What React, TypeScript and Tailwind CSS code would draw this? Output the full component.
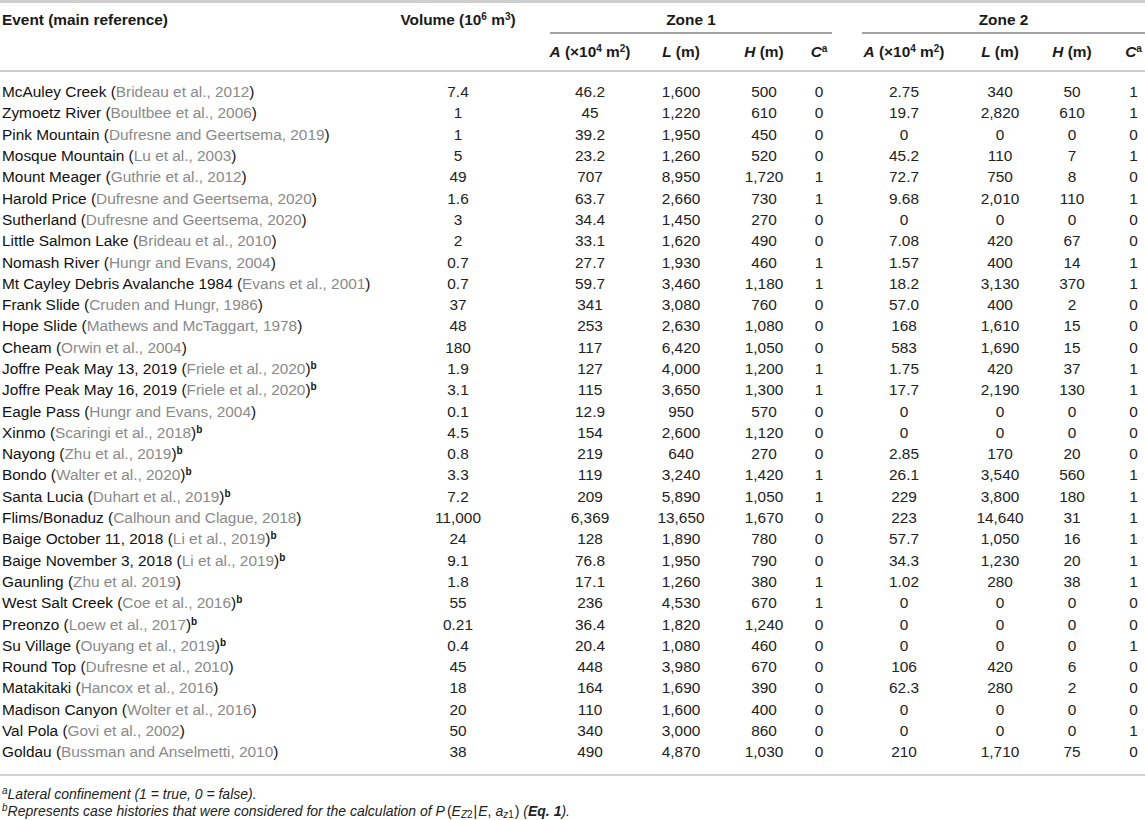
import React from 'react';

type Row = {
  name: string;
  cite: string;
  b?: boolean;
  v: string[];
};

const rows: Row[] = [
  { name: 'McAuley Creek', cite: 'Brideau et al., 2012', v: ['7.4', '46.2', '1,600', '500', '0', '2.75', '340', '50', '1'] },
  { name: 'Zymoetz River', cite: 'Boultbee et al., 2006', v: ['1', '45', '1,220', '610', '0', '19.7', '2,820', '610', '1'] },
  { name: 'Pink Mountain', cite: 'Dufresne and Geertsema, 2019', v: ['1', '39.2', '1,950', '450', '0', '0', '0', '0', '0'] },
  { name: 'Mosque Mountain', cite: 'Lu et al., 2003', v: ['5', '23.2', '1,260', '520', '0', '45.2', '110', '7', '1'] },
  { name: 'Mount Meager', cite: 'Guthrie et al., 2012', v: ['49', '707', '8,950', '1,720', '1', '72.7', '750', '8', '0'] },
  { name: 'Harold Price', cite: 'Dufresne and Geertsema, 2020', v: ['1.6', '63.7', '2,660', '730', '1', '9.68', '2,010', '110', '1'] },
  { name: 'Sutherland', cite: 'Dufresne and Geertsema, 2020', v: ['3', '34.4', '1,450', '270', '0', '0', '0', '0', '0'] },
  { name: 'Little Salmon Lake', cite: 'Brideau et al., 2010', v: ['2', '33.1', '1,620', '490', '0', '7.08', '420', '67', '0'] },
  { name: 'Nomash River', cite: 'Hungr and Evans, 2004', v: ['0.7', '27.7', '1,930', '460', '1', '1.57', '400', '14', '1'] },
  { name: 'Mt Cayley Debris Avalanche 1984', cite: 'Evans et al., 2001', v: ['0.7', '59.7', '3,460', '1,180', '1', '18.2', '3,130', '370', '1'] },
  { name: 'Frank Slide', cite: 'Cruden and Hungr, 1986', v: ['37', '341', '3,080', '760', '0', '57.0', '400', '2', '0'] },
  { name: 'Hope Slide', cite: 'Mathews and McTaggart, 1978', v: ['48', '253', '2,630', '1,080', '0', '168', '1,610', '15', '0'] },
  { name: 'Cheam', cite: 'Orwin et al., 2004', v: ['180', '117', '6,420', '1,050', '0', '583', '1,690', '15', '0'] },
  { name: 'Joffre Peak May 13, 2019', cite: 'Friele et al., 2020', b: true, v: ['1.9', '127', '4,000', '1,200', '1', '1.75', '420', '37', '1'] },
  { name: 'Joffre Peak May 16, 2019', cite: 'Friele et al., 2020', b: true, v: ['3.1', '115', '3,650', '1,300', '1', '17.7', '2,190', '130', '1'] },
  { name: 'Eagle Pass', cite: 'Hungr and Evans, 2004', v: ['0.1', '12.9', '950', '570', '0', '0', '0', '0', '0'] },
  { name: 'Xinmo', cite: 'Scaringi et al., 2018', b: true, v: ['4.5', '154', '2,600', '1,120', '0', '0', '0', '0', '0'] },
  { name: 'Nayong', cite: 'Zhu et al., 2019', b: true, v: ['0.8', '219', '640', '270', '0', '2.85', '170', '20', '0'] },
  { name: 'Bondo', cite: 'Walter et al., 2020', b: true, v: ['3.3', '119', '3,240', '1,420', '1', '26.1', '3,540', '560', '1'] },
  { name: 'Santa Lucia', cite: 'Duhart et al., 2019', b: true, v: ['7.2', '209', '5,890', '1,050', '1', '229', '3,800', '180', '1'] },
  { name: 'Flims/Bonaduz', cite: 'Calhoun and Clague, 2018', v: ['11,000', '6,369', '13,650', '1,670', '0', '223', '14,640', '31', '1'] },
  { name: 'Baige October 11, 2018', cite: 'Li et al., 2019', b: true, v: ['24', '128', '1,890', '780', '0', '57.7', '1,050', '16', '1'] },
  { name: 'Baige November 3, 2018', cite: 'Li et al., 2019', b: true, v: ['9.1', '76.8', '1,950', '790', '0', '34.3', '1,230', '20', '1'] },
  { name: 'Gaunling', cite: 'Zhu et al. 2019', v: ['1.8', '17.1', '1,260', '380', '1', '1.02', '280', '38', '1'] },
  { name: 'West Salt Creek', cite: 'Coe et al., 2016', b: true, v: ['55', '236', '4,530', '670', '1', '0', '0', '0', '0'] },
  { name: 'Preonzo', cite: 'Loew et al., 2017', b: true, v: ['0.21', '36.4', '1,820', '1,240', '0', '0', '0', '0', '0'] },
  { name: 'Su Village', cite: 'Ouyang et al., 2019', b: true, v: ['0.4', '20.4', '1,080', '460', '0', '0', '0', '0', '1'] },
  { name: 'Round Top', cite: 'Dufresne et al., 2010', v: ['45', '448', '3,980', '670', '0', '106', '420', '6', '0'] },
  { name: 'Matakitaki', cite: 'Hancox et al., 2016', v: ['18', '164', '1,690', '390', '0', '62.3', '280', '2', '0'] },
  { name: 'Madison Canyon', cite: 'Wolter et al., 2016', v: ['20', '110', '1,600', '400', '0', '0', '0', '0', '0'] },
  { name: 'Val Pola', cite: 'Govi et al., 2002', v: ['50', '340', '3,000', '860', '0', '0', '0', '0', '1'] },
  { name: 'Goldau', cite: 'Bussman and Anselmetti, 2010', v: ['38', '490', '4,870', '1,030', '0', '210', '1,710', '75', '0'] },
];

// volume, then A/L/H/C for zone 1 and zone 2
const cols = [
  'w-[124px]',
  'ml-[25px] w-[90px]',
  'ml-[20px] w-[52px]',
  'ml-[30px] w-[54px]',
  'ml-[12px] w-[32px]',
  'ml-[25px] w-[88px]',
  'ml-[24px] w-[56px]',
  'ml-[16px] w-[56px]',
  'ml-[22px] w-[23px]',
];

const Cell: React.FC<{ i: number; children: React.ReactNode }> = ({ i, children }) => (
  <div className={`${cols[i]} flex shrink-0 justify-center whitespace-nowrap`}>{children}</div>
);

const App: React.FC = () => {
  const heads = [
    <span key="a">
      <i>A</i> (×10<sup className="text-[10px]">4</sup> m<sup className="text-[10px]">2</sup>)
    </span>,
    <span key="l">
      <i>L</i> (m)
    </span>,
    <span key="h">
      <i>H</i> (m)
    </span>,
    <span key="c">
      <i>C</i>
      <sup className="text-[10px]">a</sup>
    </span>,
  ];

  return (
    <div className="h-[820px] w-[1145px] overflow-hidden bg-white text-[15.4px] text-[#1a1a1a] font-['Liberation_Sans',Arial,sans-serif]">
      <div className="h-[3px] bg-[#cfcfcf]" />

      {/* header row 1 */}
      <div className="flex font-bold leading-[22px]">
        <div className="w-[396px] shrink-0 pl-[2px] pt-[6px]">Event (main reference)</div>
        <div className="flex w-[124px] shrink-0 justify-center whitespace-nowrap pt-[6px]">
          <span>
            Volume (10<sup className="text-[10px]">6</sup> m<sup className="text-[10px]">3</sup>)
          </span>
        </div>
        <div className="ml-[30px] w-[282px] shrink-0 border-b-2 border-[#a3a3a3] pb-[1px] pt-[6px] text-center">Zone 1</div>
        <div className="ml-[30px] w-[283px] shrink-0 border-b-2 border-[#a3a3a3] pb-[1px] pt-[6px] text-center">Zone 2</div>
      </div>

      {/* header row 2 */}
      <div className="flex border-b-2 border-[#cdcdcd] pb-[7px] pt-[7px] font-bold leading-[22px]">
        <div className="w-[520px] shrink-0" />
        {[...heads, ...heads].map((h, i) => (
          <Cell key={i} i={i + 1}>
            {h}
          </Cell>
        ))}
      </div>

      {/* body */}
      <div className="border-b-2 border-[#d2d2d2] pb-[11px] pt-[9px] text-[#222]">
        {rows.map((r) => (
          <div key={r.name} className="flex h-[21.3px] items-center leading-[21px]">
            <div className="w-[396px] shrink-0 whitespace-nowrap pl-[2px] text-[#111]">
              {r.name} (<span className="text-[#8a8a8a]">{r.cite}</span>)
              {r.b && <sup className="text-[10px] font-bold">b</sup>}
            </div>
            {r.v.map((val, i) => (
              <Cell key={i} i={i}>
                {val}
              </Cell>
            ))}
          </div>
        ))}
      </div>

      {/* notes */}
      <div className="pl-[2px] pt-[10px] text-[14px] italic leading-[17px] text-[#222]">
        <p>
          <sup className="text-[10px]">a</sup>Lateral confinement (1 = true, 0 = false).
        </p>
        <p className="whitespace-nowrap">
          <sup className="text-[10px]">b</sup>Represents case histories that were considered for the calculation of{' '}
          <span className="not-italic">
            <i>P</i>
            <span className="ml-[2px]">(</span>
            <i>E</i>
            <sub className="bottom-[-2px] text-[10px]">
              <i>Z</i>2
            </sub>
            <span className="mx-[1px]">|</span>
            <i>E</i>, <i>a</i>
            <sub className="bottom-[-2px] text-[10px]">
              <i>z</i>1
            </sub>
            <span className="ml-[1px]">)</span>
          </span>{' '}
          (<b>Eq. 1</b>).
        </p>
      </div>
    </div>
  );
};

export default App;
